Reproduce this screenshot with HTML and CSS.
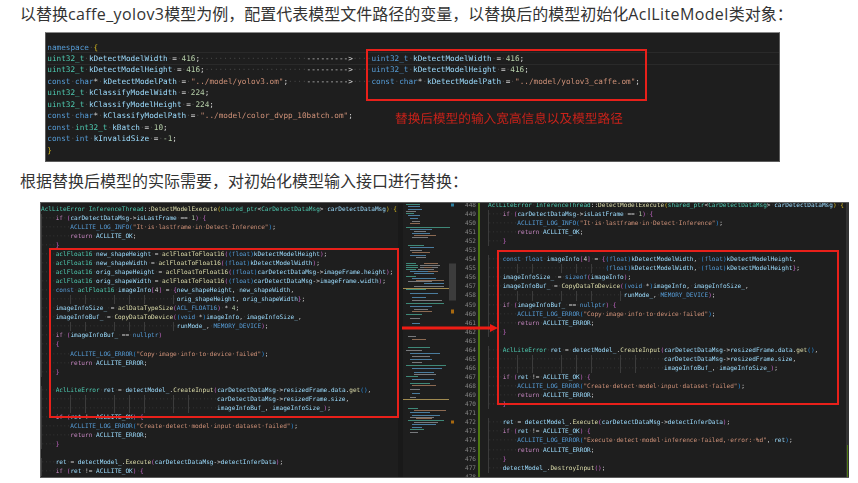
FILE: index.html
```html
<!DOCTYPE html>
<html lang="zh-CN">
<head>
<meta charset="utf-8">
<title>替换模型</title>
<link rel="stylesheet" href="styles.css">
</head>
<body>
<p class="para first">以替换<span class="lat">caffe_yolov3</span>模型为例，配置代表模型文件路径的变量，以替换后的模型初始化<span class="lat">AclLiteModel</span>类对象：</p>
<section class="shot shot-top">
<div class="top-code">
<div class="row"><span class="k">namespace</span><i>·</i><span class="y">{</span></div>
<div class="row cur"><span class="t">uint32_t</span><i>·</i><span class="v">kDetectModelWidth</span><i>·</i>=<i>·</i><span class="n">416</span>;<i>·······················</i>---------&gt;<i>····</i><span class="k">uint32_t</span><i>·</i><span class="v">kDetectModelWidth</span><i>·</i>=<i>·</i><span class="n">416</span>;</div>
<div class="row"><span class="t">uint32_t</span><i>·</i><span class="v">kDetectModelHeight</span><i>·</i>=<i>·</i><span class="n">416</span>;<i>······················</i>---------&gt;<i>····</i><span class="k">uint32_t</span><i>·</i><span class="v">kDetectModelHeight</span><i>·</i>=<i>·</i><span class="n">416</span>;</div>
<div class="row"><span class="k">const</span><i>·</i><span class="k">char</span>*<i>·</i><span class="v">kDetectModelPath</span><i>·</i>=<i>·</i><span class="s">"../model/yolov3.om"</span>;<i>····</i>---------&gt;<i>····</i><span class="k">const</span><i>·</i><span class="k">char</span>*<i>·</i><span class="v">kDetectModelPath</span><i>·</i>=<i>·</i><span class="s">"../model/yolov3_caffe.om"</span>;</div>
<div class="row"><span class="t">uint32_t</span><i>·</i><span class="v">kClassifyModelWidth</span><i>·</i>=<i>·</i><span class="n">224</span>;</div>
<div class="row"><span class="t">uint32_t</span><i>·</i><span class="v">kClassifyModelHeight</span><i>·</i>=<i>·</i><span class="n">224</span>;</div>
<div class="row"><span class="k">const</span><i>·</i><span class="k">char</span>*<i>·</i><span class="v">kClassifyModelPath</span><i>·</i>=<i>·</i><span class="s">"../model/color_dvpp_10batch.om"</span>;</div>
<div class="row"><span class="k">const</span><i>·</i><span class="t">int32_t</span><i>·</i><span class="v">kBatch</span><i>·</i>=<i>·</i><span class="n">10</span>;</div>
<div class="row"><span class="k">const</span><i>·</i><span class="k">int</span><i>·</i><span class="v">kInvalidSize</span><i>·</i>=<i>·</i><span class="n">-1</span>;</div>
<div class="row"><span class="y">}</span></div>
</div>
<div class="box box-top"></div>
<div class="note">替换后模型的输入宽高信息以及模型路径</div>
</section>
<p class="para second">根据替换后模型的实际需要，对初始化模型输入接口进行替换：</p>
<section class="shot shot-main">
<pre class="code code-left"><span class="t">AclLiteError</span><i>·</i><span class="t">InferenceThread</span>::<span class="f">DetectModelExecute</span><span class="y">(</span><span class="t">shared_ptr</span>&lt;<span class="t">CarDetectDataMsg</span>&gt;<i>·</i><span class="v">carDetectDataMsg</span><span class="y">)</span><i>·</i><span class="y">{</span>
<i class="g">····</i><span class="p">if</span><i>·</i><span class="m">(</span><span class="v">carDetectDataMsg</span>-&gt;<span class="v">isLastFrame</span><i>·</i>==<i>·</i><span class="n">1</span><span class="m">)</span><i>·</i><span class="m">{</span>
<i class="g">········</i><span class="k">ACLLITE_LOG_INFO</span><span class="b">(</span><span class="s">"It·is·lastframe·in·Detect·Inference"</span><span class="b">)</span>;
<i class="g">········</i><span class="p">return</span><i>·</i><span class="v">ACLLITE_OK</span>;
<i class="g">····</i><span class="m">}</span>
<i class="g">····</i><span class="t">aclFloat16</span><i>·</i><span class="v">new_shapeHeight</span><i>·</i>=<i>·</i><span class="f">aclFloatToFloat16</span><span class="m">(</span><span class="b">(</span><span class="k">float</span><span class="b">)</span><span class="v">kDetectModelHeight</span><span class="m">)</span>;
<i class="g">····</i><span class="t">aclFloat16</span><i>·</i><span class="v">new_shapeWidth</span><i>·</i>=<i>·</i><span class="f">aclFloatToFloat16</span><span class="m">(</span><span class="b">(</span><span class="k">float</span><span class="b">)</span><span class="v">kDetectModelWidth</span><span class="m">)</span>;
<i class="g">····</i><span class="t">aclFloat16</span><i>·</i><span class="v">orig_shapeHeight</span><i>·</i>=<i>·</i><span class="f">aclFloatToFloat16</span><span class="m">(</span><span class="b">(</span><span class="k">float</span><span class="b">)</span><span class="v">carDetectDataMsg</span>-&gt;<span class="v">imageFrame.height</span><span class="m">)</span>;
<i class="g">····</i><span class="t">aclFloat16</span><i>·</i><span class="v">orig_shapeWidth</span><i>·</i>=<i>·</i><span class="f">aclFloatToFloat16</span><span class="m">(</span><span class="b">(</span><span class="k">float</span><span class="b">)</span><span class="v">carDetectDataMsg</span>-&gt;<span class="v">imageFrame.width</span><span class="m">)</span>;
<i class="g">····</i><span class="k">const</span><i>·</i><span class="t">aclFloat16</span><i>·</i><span class="v">imageInfo</span><span class="m">[</span>4<span class="m">]</span><i>·</i>=<i>·</i><span class="m">{</span><span class="v">new_shapeHeight</span>,<i>·</i><span class="v">new_shapeWidth</span>,
<i class="g">·····································</i><span class="v">orig_shapeHeight</span>,<i>·</i><span class="v">orig_shapeWidth</span><span class="m">}</span>;
<i class="g">····</i><span class="v">imageInfoSize_</span><i>·</i>=<i>·</i><span class="f">aclDataTypeSize</span><span class="m">(</span><span class="k">ACL_FLOAT16</span><span class="m">)</span><i>·</i>*<i>·</i><span class="n">4</span>;
<i class="g">····</i><span class="v">imageInfoBuf_</span><i>·</i>=<i>·</i><span class="f">CopyDataToDevice</span><span class="m">(</span><span class="b">(</span><span class="k">void</span><i>·</i>*<span class="b">)</span><span class="v">imageInfo</span>,<i>·</i><span class="v">imageInfoSize_</span>,
<i class="g">·····································</i><span class="v">runMode_</span>,<i>·</i><span class="k">MEMORY_DEVICE</span><span class="m">)</span>;
<i class="g">····</i><span class="p">if</span><i>·</i><span class="m">(</span><span class="v">imageInfoBuf_</span><i>·</i>==<i>·</i><span class="k">nullptr</span><span class="m">)</span>
<i class="g">····</i><span class="m">{</span>
<i class="g">········</i><span class="k">ACLLITE_LOG_ERROR</span><span class="b">(</span><span class="s">"Copy·image·info·to·device·failed"</span><span class="b">)</span>;
<i class="g">········</i><span class="p">return</span><i>·</i><span class="v">ACLLITE_ERROR</span>;
<i class="g">····</i><span class="m">}</span>

<i class="g">····</i><span class="t">AclLiteError</span><i>·</i><span class="v">ret</span><i>·</i>=<i>·</i><span class="v">detectModel_</span>.<span class="f">CreateInput</span><span class="m">(</span><span class="v">carDetectDataMsg</span>-&gt;<span class="v">resizedFrame.data</span>.<span class="f">get</span><span class="b">()</span>,
<i class="g">················································</i><span class="v">carDetectDataMsg</span>-&gt;<span class="v">resizedFrame.size</span>,
<i class="g">················································</i><span class="v">imageInfoBuf_</span>,<i>·</i><span class="v">imageInfoSize_</span><span class="m">)</span>;
<i class="g">····</i><span class="p">if</span><i>·</i><span class="m">(</span><span class="v">ret</span><i>·</i>!=<i>·</i><span class="v">ACLLITE_OK</span><span class="m">)</span><i>·</i><span class="m">{</span>
<i class="g">········</i><span class="k">ACLLITE_LOG_ERROR</span><span class="b">(</span><span class="s">"Create·detect·model·input·dataset·failed"</span><span class="b">)</span>;
<i class="g">········</i><span class="p">return</span><i>·</i><span class="v">ACLLITE_ERROR</span>;
<i class="g">····</i><span class="m">}</span>

<i class="g">····</i><span class="v">ret</span><i>·</i>=<i>·</i><span class="v">detectModel_</span>.<span class="f">Execute</span><span class="m">(</span><span class="v">carDetectDataMsg</span>-&gt;<span class="v">detectInferData</span><span class="m">)</span>;
<i class="g">····</i><span class="p">if</span><i>·</i><span class="m">(</span><span class="v">ret</span><i>·</i>!=<i>·</i><span class="v">ACLLITE_OK</span><span class="m">)</span><i>·</i><span class="m">{</span></pre>
<svg class="minimap" viewBox="0 0 58 275" aria-hidden="true">
<rect class="mm-bg" width="58" height="275"/>
<rect class="mm-edge" width="5" height="275"/>
<rect class="mm-slider" x="51" y="60" width="7" height="37"/>
<path class="mm-teal" d="M8 1h14M8 10h8M8 24h44M10 42h16M8 60h10M8 62h12M8 64h12M8 66h10M8 73h10M8 86h20M8 100h38M8 111h16M10 144h22M8 162h40M8 173h12M12 180h20M10 205h10M10 217h36M12 226h14"/>
<path class="mm-blue" d="M10 3h12M10 6h14M10 12h12M12 15h8M12 26h22M14 30h18M12 44h24M12 52h16M12 68h26M16 70h20M14 75h24M26 80h20M12 90h28M14 94h14M12 103h22M14 120h8M14 124h12M12 150h30M12 156h22M14 165h30M16 169h20M14 176h22M14 190h8M12 209h20M14 212h28M14 221h24M14 224h10"/>
<path class="mm-grey" d="M8 8h10M14 18h8M16 28h12M14 34h16M12 47h12M18 54h10M22 62h20M22 64h18M20 66h16M10 78h24M16 83h30M14 97h30M16 106h14M12 115h10M10 133h8M8 147h16M14 153h18M14 159h10M16 171h22M12 186h10M12 194h6M12 214h24M16 219h24M12 229h8"/>
<path class="mm-orange" d="M12 20h10M16 32h22M14 49h18M26 64h8M26 60h14M30 68h10M18 77h28M14 108h20M14 136h14M14 182h24M16 207h32M18 215h16"/>
<path class="mm-gold" d="M5 85h46M5 196h46"/>
<rect class="mm-mark" x="53" y="106" width="3" height="4"/>
<rect class="mm-mark" x="53" y="217" width="3" height="3"/>
<rect class="mm-tick" x="53" y="0" width="3" height="3"/>
</svg>
<pre class="nums">448
449
450
451
452
453
454
455
456
457
458
459
460
461
462
463
464
465
466
467
468
469
470
471
472
473
474
475
476
477
478</pre>
<div class="git"></div>
<pre class="code code-right"><span class="t">AclLiteError</span><i>·</i><span class="t">InferenceThread</span>::<span class="f">DetectModelExecute</span><span class="y">(</span><span class="t">shared_ptr</span>&lt;<span class="t">CarDetectDataMsg</span>&gt;<i>·</i><span class="v">carDetectDataMsg</span><span class="y">)</span><i>·</i><span class="y">{</span>
<i class="g">····</i><span class="p">if</span><i>·</i><span class="m">(</span><span class="v">carDetectDataMsg</span>-&gt;<span class="v">isLastFrame</span><i>·</i>==<i>·</i><span class="n">1</span><span class="m">)</span><i>·</i><span class="m">{</span>
<i class="g">········</i><span class="k">ACLLITE_LOG_INFO</span><span class="b">(</span><span class="s">"It·is·lastframe·in·Detect·Inference"</span><span class="b">)</span>;
<i class="g">········</i><span class="p">return</span><i>·</i><span class="v">ACLLITE_OK</span>;
<i class="g">····</i><span class="m">}</span>

<i class="g">····</i><span class="k">const</span><i>·</i><span class="k">float</span><i>·</i><span class="v">imageInfo</span><span class="m">[</span>4<span class="m">]</span><i>·</i>=<i>·</i><span class="m">{</span><span class="b">(</span><span class="k">float</span><span class="b">)</span><span class="v">kDetectModelWidth</span>,<i>·</i><span class="b">(</span><span class="k">float</span><span class="b">)</span><span class="v">kDetectModelHeight</span>,
<i class="g">································</i><span class="b">(</span><span class="k">float</span><span class="b">)</span><span class="v">kDetectModelWidth</span>,<i>·</i><span class="b">(</span><span class="k">float</span><span class="b">)</span><span class="v">kDetectModelHeight</span><span class="m">}</span>;
<i class="g">····</i><span class="v">imageInfoSize_</span><i>·</i>=<i>·</i><span class="k">sizeof</span><span class="m">(</span><span class="v">imageInfo</span><span class="m">)</span>;
<i class="g">····</i><span class="v">imageInfoBuf_</span><i>·</i>=<i>·</i><span class="f">CopyDataToDevice</span><span class="m">(</span><span class="b">(</span><span class="k">void</span><i>·</i>*<span class="b">)</span><span class="v">imageInfo</span>,<i>·</i><span class="v">imageInfoSize_</span>,
<i class="g">·····································</i><span class="v">runMode_</span>,<i>·</i><span class="k">MEMORY_DEVICE</span><span class="m">)</span>;
<i class="g">····</i><span class="p">if</span><i>·</i><span class="m">(</span><span class="v">imageInfoBuf_</span><i>·</i>==<i>·</i><span class="k">nullptr</span><span class="m">)</span><i>·</i><span class="m">{</span>
<i class="g">········</i><span class="k">ACLLITE_LOG_ERROR</span><span class="b">(</span><span class="s">"Copy·image·info·to·device·failed"</span><span class="b">)</span>;
<i class="g">········</i><span class="p">return</span><i>·</i><span class="v">ACLLITE_ERROR</span>;
<i class="g">····</i><span class="m">}</span>

<i class="g">····</i><span class="t">AclLiteError</span><i>·</i><span class="v">ret</span><i>·</i>=<i>·</i><span class="v">detectModel_</span>.<span class="f">CreateInput</span><span class="m">(</span><span class="v">carDetectDataMsg</span>-&gt;<span class="v">resizedFrame.data</span>.<span class="f">get</span><span class="b">()</span>,
<i class="g">················································</i><span class="v">carDetectDataMsg</span>-&gt;<span class="v">resizedFrame.size</span>,
<i class="g">················································</i><span class="v">imageInfoBuf_</span>,<i>·</i><span class="v">imageInfoSize_</span><span class="m">)</span>;
<i class="g">····</i><span class="p">if</span><i>·</i><span class="m">(</span><span class="v">ret</span><i>·</i>!=<i>·</i><span class="v">ACLLITE_OK</span><span class="m">)</span><i>·</i><span class="m">{</span>
<i class="g">········</i><span class="k">ACLLITE_LOG_ERROR</span><span class="b">(</span><span class="s">"Create·detect·model·input·dataset·failed"</span><span class="b">)</span>;
<i class="g">········</i><span class="p">return</span><i>·</i><span class="v">ACLLITE_ERROR</span>;
<i class="g">····</i><span class="m">}</span>

<i class="g">····</i><span class="v">ret</span><i>·</i>=<i>·</i><span class="v">detectModel_</span>.<span class="f">Execute</span><span class="m">(</span><span class="v">carDetectDataMsg</span>-&gt;<span class="v">detectInferData</span><span class="m">)</span>;
<i class="g">····</i><span class="p">if</span><i>·</i><span class="m">(</span><span class="v">ret</span><i>·</i>!=<i>·</i><span class="v">ACLLITE_OK</span><span class="m">)</span><i>·</i><span class="m">{</span>
<i class="g">········</i><span class="k">ACLLITE_LOG_ERROR</span><span class="b">(</span><span class="s">"Execute·detect·model·inference·failed,·error:·%d"</span>,<i>·</i><span class="v">ret</span><span class="b">)</span>;
<i class="g">········</i><span class="p">return</span><i>·</i><span class="v">ACLLITE_ERROR</span>;
<i class="g">····</i><span class="m">}</span>
<i class="g">····</i><span class="v">detectModel_</span>.<span class="f">DestroyInput</span><span class="m">()</span>;</pre>
<div class="scroll"><div class="scroll-mark"></div></div>
<div class="box box-left"></div>
<div class="box box-right"></div>
<svg class="arrow" viewBox="0 0 96 10" aria-hidden="true"><path d="M0 3.6H88V1L96 5L88 9V6.4H0Z"/></svg>
</section>
</body>
</html>
```

FILE: styles.css
```css
* { box-sizing: border-box; }

html, body { margin: 0; padding: 0; background: #fff; }

body {
  width: 858px;
  height: 483px;
  overflow: hidden;
  font-family: "Open Sans", "Noto Sans CJK SC", sans-serif;
  color: #333;
}

.para {
  margin: 0;
  padding-left: 20px;
  font-size: 16px;
  line-height: 20px;
  white-space: nowrap;
}

.lat { letter-spacing: 0.38px; }

.first { height: 32px; padding-top: 4px; }
.second { height: 40px; padding-top: 9px; }

.shot {
  position: relative;
  overflow: hidden;
  background: #1e1e1e;
  border: 1px solid #5c5c5c;
  filter: blur(0.4px);
  font-family: "DejaVu Sans Mono", "Liberation Mono", monospace;
  color: #cfcfcf;
  text-rendering: geometricPrecision;
}

.shot-top {
  width: 735px;
  height: 130px;
  margin-left: 45px;
  border-top-color: #8a8a8a;
}

.top-code {
  padding: 8.6px 0 0 1.3px;
  font-size: 7.7px;
  line-height: 11.44px;
}

.row { height: 11.44px; white-space: pre; }
.cur { box-shadow: 0 -1px #2a2a2a, 0 1px #2a2a2a; }

.shot-main {
  display: flex;
  width: 809px;
  height: 276px;
  margin-left: 40px;
  border-right: 0;
}

.code {
  margin: 0;
  font: inherit;
  font-size: 6.1px;
  line-height: 9.07px;
  white-space: pre;
  overflow: hidden;
}

.code-left { flex: 0 0 357px; padding-top: 1.5px; }
.code-right { flex: 0 0 358px; margin-top: -2.2px; }

.minimap { flex: 0 0 58px; width: 58px; height: 276px; }
.mm-bg { fill: #1e1e1e; }
.mm-edge { fill: #191919; }
.mm-slider { fill: #3c3c3c; }
.mm-teal, .mm-blue, .mm-grey, .mm-orange, .mm-gold { fill: none; stroke-width: 1; }
.mm-teal { stroke: #3f8878; }
.mm-blue { stroke: #4a7c9e; }
.mm-grey { stroke: #77797c; }
.mm-orange { stroke: #8c6a52; }
.mm-gold { stroke: #a08a50; }
.mm-mark { fill: #a8690f; }
.mm-tick { fill: #2c7fa0; }

.nums {
  flex: 0 0 20px;
  margin: -2.2px 0 0;
  overflow: hidden;
  font: inherit;
  font-size: 6.1px;
  line-height: 9.07px;
  text-align: right;
  color: #858585;
}

.git {
  flex: 0 0 2px;
  margin: 0 8px 0 2px;
  background: #4f7a12;
}

.scroll {
  position: relative;
  flex: 0 0 3px;
  background: #333;
}

.scroll-mark {
  position: absolute;
  left: 1px;
  right: 1px;
  bottom: 0;
  height: 32px;
  background: #4f7a12;
}

.box {
  position: absolute;
  border: 2px solid #e8201a;
}

.box-top { left: 320px; top: 16px; width: 281px; height: 52px; }
.box-left { left: 8px; top: 45px; width: 350px; height: 170px; }
.box-right { left: 456px; top: 47px; width: 342px; height: 155px; }

.note {
  position: absolute;
  left: 349px;
  top: 76px;
  font-family: "Noto Sans CJK SC", sans-serif;
  font-size: 12.67px;
  line-height: 18px;
  color: #c9221a;
  white-space: nowrap;
}

.arrow {
  position: absolute;
  left: 361px;
  top: 120px;
  width: 96px;
  height: 10px;
  fill: #ee1c14;
}

.shot i {
  font-style: normal;
  color: #454545;
}

.shot .g {
  display: inline-block;
  background: repeating-linear-gradient(90deg, #3c3c3c 0 0.7px, transparent 0.7px 14.69px);
}

.k { color: #569cd6; }
.t { color: #4ec9b0; }
.v { color: #9cdcfe; }
.f { color: #dcdcaa; }
.s { color: #ce9178; }
.n { color: #b5cea8; }
.p { color: #c586c0; }
.y { color: #d7ba20; }
.m { color: #c266c4; }
.b { color: #2b8fe0; }
```
